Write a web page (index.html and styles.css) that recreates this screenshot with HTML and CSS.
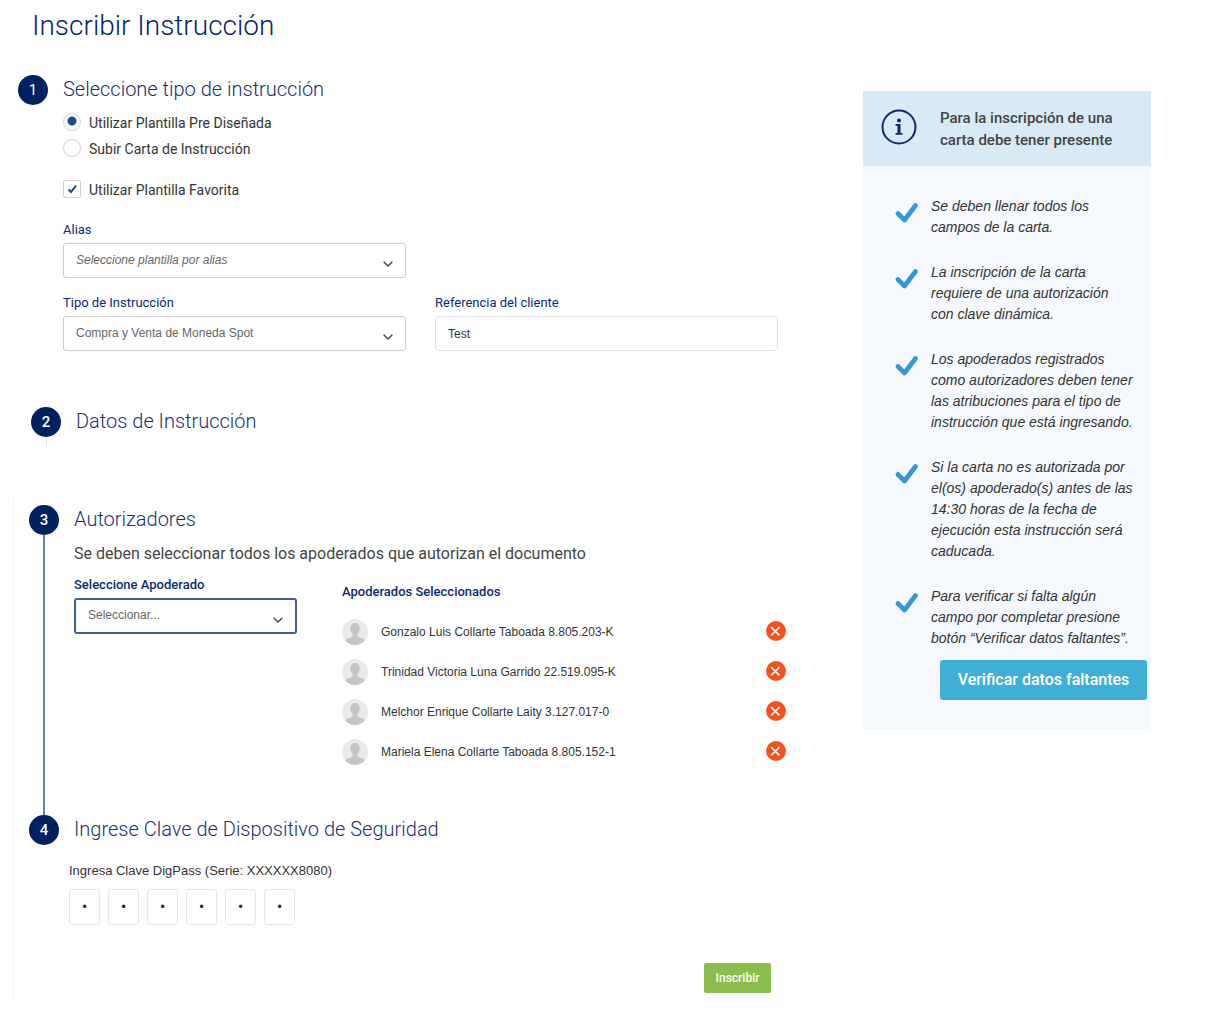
FILE: index.html
```html
<!DOCTYPE html>
<html lang="es">
<head>
<meta charset="utf-8">
<meta name="viewport" content="width=device-width, initial-scale=1">
<title>Inscribir Instrucción</title>
<link rel="stylesheet" href="styles.css">
</head>
<body>
<svg class="sprite" aria-hidden="true">
  <symbol id="tick" viewBox="0 0 24 22"><path d="M3 11.500L9.500 18L20.500 3.500" fill="none" stroke="#3298d6" stroke-width="4.600" stroke-linejoin="round" stroke-linecap="round"/></symbol>
  <symbol id="person" viewBox="0 0 26 26">
    <circle cx="13" cy="13" r="13" fill="#ebebeb"/>
    <path d="M13 4c-3 0-4.700 2-4.600 5-.6.200-.5 2.200.5 2.900.3 1.500.9 2.500 1.700 3.200v2.200c-1 1.500-5.600 1.700-7.600 3.900A13 13 0 0 0 13 26a13 13 0 0 0 10-4.800c-2-2.200-6.600-2.400-7.600-3.900v-2.200c.8-.7 1.400-1.700 1.700-3.200 1-.7 1.100-2.700.5-2.900C17.700 6 16 4 13 4z" fill="#c4c4c4"/>
  </symbol>
  <symbol id="cross" viewBox="0 0 20 20"><circle cx="10" cy="10" r="10" fill="#f4511a"/><path d="M5.500 6.500L13 14M13 6.500L5.500 14" stroke="#fff" stroke-width="1.700" stroke-linecap="round"/></symbol>
</svg>
<div class="page">
  <main class="main">
    <h1 class="title">Inscribir Instrucción</h1>
    <form>
      <section class="step step-type">
        <div class="rail"><span class="marker marker-thin">1</span></div>
        <div class="content">
          <h2 class="heading">Seleccione tipo de instrucción</h2>
          <div class="choices">
            <label class="choice"><input class="radio" type="radio" name="tipo" checked>Utilizar Plantilla Pre Diseñada</label>
            <label class="choice"><input class="radio" type="radio" name="tipo">Subir Carta de Instrucción</label>
            <label class="choice choice-favorite"><input class="check" type="checkbox" checked>Utilizar Plantilla Favorita</label>
          </div>
          <div class="fields">
            <div class="field field-alone">
              <label class="label" for="alias">Alias</label>
              <select class="control select placeholder" id="alias"><option>Seleccione plantilla por alias</option></select>
            </div>
            <div class="field">
              <label class="label" for="instruccion">Tipo de Instrucción</label>
              <select class="control select" id="instruccion"><option>Compra y Venta de Moneda Spot</option></select>
            </div>
            <div class="field">
              <label class="label" for="referencia">Referencia del cliente</label>
              <input class="control text" id="referencia" type="text" value="Test">
            </div>
          </div>
        </div>
      </section>

      <section class="step step-data">
        <div class="rail"><span class="marker">2</span><span class="line line-short"></span></div>
        <div class="content"><h2 class="heading">Datos de Instrucción</h2></div>
      </section>

      <div class="panel">
        <section class="step">
          <div class="rail"><span class="marker">3</span><span class="line"></span></div>
          <div class="content content-signers">
            <h2 class="heading">Autorizadores</h2>
            <p class="intro">Se deben seleccionar todos los apoderados que autorizan el documento</p>
            <div class="signers">
              <div class="field">
                <label class="label label-strong" for="apoderado">Seleccione Apoderado</label>
                <select class="control select select-active" id="apoderado"><option>Seleccionar...</option></select>
              </div>
              <div class="selected">
                <h3 class="label label-strong">Apoderados Seleccionados</h3>
                <ul class="people">
                  <li class="person"><svg class="avatar"><use href="#person"/></svg><span class="name">Gonzalo Luis Collarte Taboada 8.805.203-K</span><button class="remove" type="button" aria-label="Quitar"><svg><use href="#cross"/></svg></button></li>
                  <li class="person"><svg class="avatar"><use href="#person"/></svg><span class="name">Trinidad Victoria Luna Garrido 22.519.095-K</span><button class="remove" type="button" aria-label="Quitar"><svg><use href="#cross"/></svg></button></li>
                  <li class="person"><svg class="avatar"><use href="#person"/></svg><span class="name">Melchor Enrique Collarte Laity 3.127.017-0</span><button class="remove" type="button" aria-label="Quitar"><svg><use href="#cross"/></svg></button></li>
                  <li class="person"><svg class="avatar"><use href="#person"/></svg><span class="name">Mariela Elena Collarte Taboada 8.805.152-1</span><button class="remove" type="button" aria-label="Quitar"><svg><use href="#cross"/></svg></button></li>
                </ul>
              </div>
            </div>
          </div>
        </section>

        <section class="step step-key">
          <div class="rail"><span class="marker">4</span></div>
          <div class="content">
            <h2 class="heading">Ingrese Clave de Dispositivo de Seguridad</h2>
            <fieldset class="key">
              <legend class="key-label">Ingresa Clave DigPass (Serie: XXXXXX8080)</legend>
              <div class="digits">
                <input class="digit" type="text" value="•" maxlength="1" aria-label="Dígito 1">
                <input class="digit" type="text" value="•" maxlength="1" aria-label="Dígito 2">
                <input class="digit" type="text" value="•" maxlength="1" aria-label="Dígito 3">
                <input class="digit" type="text" value="•" maxlength="1" aria-label="Dígito 4">
                <input class="digit" type="text" value="•" maxlength="1" aria-label="Dígito 5">
                <input class="digit" type="text" value="•" maxlength="1" aria-label="Dígito 6">
              </div>
            </fieldset>
          </div>
        </section>
        <div class="actions"><button class="submit" type="submit">Inscribir</button></div>
      </div>
    </form>
  </main>

  <aside class="notice">
    <header class="notice-head">
      <svg class="info" viewBox="0 0 36 36" aria-hidden="true"><circle cx="18" cy="18" r="16.500" fill="none" stroke="#0b2a72" stroke-width="2"/><circle cx="18" cy="11.500" r="2" fill="#0b2a72"/><path d="M14.500 15h5v9h2v1.800h-7V24h2v-7.200h-2z" fill="#0b2a72"/></svg>
      <h2 class="notice-title">Para la inscripción de una carta debe tener presente</h2>
    </header>
    <ul class="rules">
      <li class="rule"><svg class="tick"><use href="#tick"/></svg><span>Se deben llenar todos los<br>campos de la carta.</span></li>
      <li class="rule"><svg class="tick"><use href="#tick"/></svg><span>La inscripción de la carta<br>requiere de una autorización<br>con clave dinámica.</span></li>
      <li class="rule"><svg class="tick"><use href="#tick"/></svg><span>Los apoderados registrados<br>como autorizadores deben tener<br>las atribuciones para el tipo de<br>instrucción que está ingresando.</span></li>
      <li class="rule"><svg class="tick"><use href="#tick"/></svg><span>Si la carta no es autorizada por<br>el(os) apoderado(s) antes de las<br>14:30 horas de la fecha de<br>ejecución esta instrucción será<br>caducada.</span></li>
      <li class="rule"><svg class="tick"><use href="#tick"/></svg><span>Para verificar si falta algún<br>campo por completar presione<br>botón “Verificar datos faltantes”.</span></li>
    </ul>
    <button class="verify" type="button">Verificar datos faltantes</button>
  </aside>
</div>
</body>
</html>
```
FILE: styles.css
```css
* { box-sizing: border-box; }

body {
  margin: 0;
  background: #fff;
  color: #333;
  font: 14px/20px Roboto, sans-serif;
}

h1, h2, h3, p, ul { margin: 0; padding: 0; }
ul { list-style: none; }
.sprite { display: none; }

.page {
  display: flex;
  align-items: flex-start;
  padding-right: 60px;
}

.main {
  flex: 1;
  min-width: 0;
  padding: 8px 77px 34px 0;
}

.title {
  margin: 0 0 31px 32px;
  color: #0a2468;
  font-size: 28px;
  font-weight: 300;
  line-height: 36px;
}

/* Steps */
.step { display: flex; gap: 15px; }
.step-type { margin-left: 18px; padding-right: 8px; }
.step-data { margin: 56px 0 51px 31px; }

.rail {
  display: flex;
  flex-direction: column;
  align-items: center;
  width: 30px;
}

.marker {
  width: 30px;
  height: 30px;
  border-radius: 50%;
  background: #00205f;
  color: #fff;
  font-size: 15px;
  font-weight: 500;
  line-height: 30px;
  text-align: center;
}
.marker-thin { font-weight: 400; }

.line { flex: 1; width: 2px; background: #6581b0; }
.line-short { flex: none; width: 1px; height: 9px; background: #e4e4e8; }

.content { flex: 1; min-width: 0; }
.content-signers { padding-bottom: 43px; }

.heading {
  color: #1a2f73;
  font-size: 20px;
  font-weight: 300;
  line-height: 28px;
}

/* Radio and tick boxes */
.choices { margin: 7px 0 17px; }

.choice {
  display: flex;
  align-items: center;
  gap: 8px;
  height: 26px;
}
.choice-favorite { margin-top: 15px; }

.radio, .check {
  appearance: none;
  width: 18px;
  height: 18px;
  margin: 0 0 3px;
  border: 1px solid #d2d2d6;
  background: #fff center / 16px 16px no-repeat;
}
.radio { border-radius: 50%; }
.radio:checked { background-image: radial-gradient(circle at 8px 7px, #1c4a8a 4px, transparent 5px); }
.check { border-radius: 2px; }
.check:checked { background-image: url("data:image/svg+xml,%3Csvg xmlns='http://www.w3.org/2000/svg' viewBox='0 0 16 16'%3E%3Cpath d='M4.500 8.500L7 11L12 4.500' fill='none' stroke='%231b438a' stroke-width='2'/%3E%3C/svg%3E"); }

/* Fields */
.fields {
  display: grid;
  grid-template-columns: 1fr 1fr;
  gap: 15px 29px;
}
.field-alone { grid-column: 1 / -1; width: calc(50% - 15px); }

.label {
  display: block;
  margin-bottom: 3px;
  color: #0b2a72;
  font-size: 13px;
  font-weight: 400;
  line-height: 20px;
}
.label-strong { font-weight: 500; }

.control {
  display: block;
  width: 100%;
  height: 35px;
  border: 1px solid #ccc;
  border-radius: 3px;
  background-color: #fff;
  color: #666;
  font: 12px/16px "Liberation Sans", Arial, sans-serif;
}
.select {
  appearance: none;
  padding: 0 30px 2px 12px;
  background-image: url("data:image/svg+xml,%3Csvg xmlns='http://www.w3.org/2000/svg' viewBox='0 0 10 6'%3E%3Cpath d='M.7.7L5 5L9.300.7' fill='none' stroke='%23444' stroke-width='1.400'/%3E%3C/svg%3E");
  background-position: right 12px top 17px;
  background-repeat: no-repeat;
  background-size: 10px 6px;
}
.placeholder { font-style: italic; }
.text { padding: 0 12px; border-color: #e2e2e2; color: #333; }
.select-active { height: 36px; border: 2px solid #3f5f9a; }

/* Authorisers */
.panel {
  margin-left: 13px;
  padding: 8px 0 8px 15px;
  border-left: 1px solid #f6f6f6;
}

.intro {
  margin: 9px 0;
  color: #444;
  font-size: 16px;
  line-height: 24px;
}

.signers {
  display: grid;
  grid-template-columns: 223px 1fr;
  gap: 45px;
}
.selected { padding-top: 7px; }
.selected .label { margin-bottom: 10px; }

.person {
  display: flex;
  align-items: center;
  height: 40px;
}
.avatar { width: 26px; height: 26px; margin-right: 13px; }
.name {
  flex: 1;
  font: 12px/16px "Liberation Sans", Arial, sans-serif;
}
.remove {
  padding: 0;
  border: 0;
  background: none;
}
.remove svg { display: block; width: 20px; height: 20px; margin-bottom: 3px; }

/* Security key */
.step-key { gap: 10px; }
.step-key .heading { padding-left: 5px; }
.key { margin: 18px 0 0; padding: 0; border: 0; }
.key-label {
  padding: 0;
  font: 13px/20px "Liberation Sans", Arial, sans-serif;
}
.digits { display: flex; gap: 8px; margin-top: 8px; }
.digit {
  width: 31px;
  height: 36px;
  padding: 0;
  border: 1px solid #e6e6e6;
  border-radius: 3px;
  color: #222;
  font: 12px/16px "Liberation Sans", Arial, sans-serif;
  text-align: center;
}

.actions { display: flex; justify-content: flex-end; margin-top: 38px; padding-right: 15px; }
.submit {
  width: 67px;
  height: 30px;
  padding: 0;
  border: 0;
  border-radius: 2px;
  background: #8abd4b;
  color: #fff;
  font: 500 12px/20px Roboto, sans-serif;
}

/* Notice */
.notice {
  width: 288px;
  margin-top: 91px;
  padding-bottom: 29px;
  background: #f5f9fd;
}
.notice-head {
  display: flex;
  align-items: center;
  gap: 23px;
  height: 75px;
  padding: 0 18px;
  background: #d7eaf6;
}
.info { flex: none; width: 36px; height: 36px; margin-bottom: 4px; }
.notice-title {
  color: #444;
  font-size: 15px;
  font-weight: 500;
  line-height: 22px;
}

.rules {
  display: flex;
  flex-direction: column;
  gap: 24px;
  padding: 30px 0 11px 32px;
}
.rule {
  display: flex;
  gap: 12px;
  font: italic 14px/21px "Liberation Sans", Arial, sans-serif;
  white-space: nowrap;
}
.tick { flex: none; width: 24px; height: 22px; margin-top: 6px; }

.verify {
  display: block;
  width: 207px;
  height: 40px;
  margin: 0 4px 0 auto;
  padding: 0;
  border: 0;
  border-radius: 3px;
  background: #41afd5;
  color: #fff;
  font: 500 16px/20px Roboto, sans-serif;
}
```
